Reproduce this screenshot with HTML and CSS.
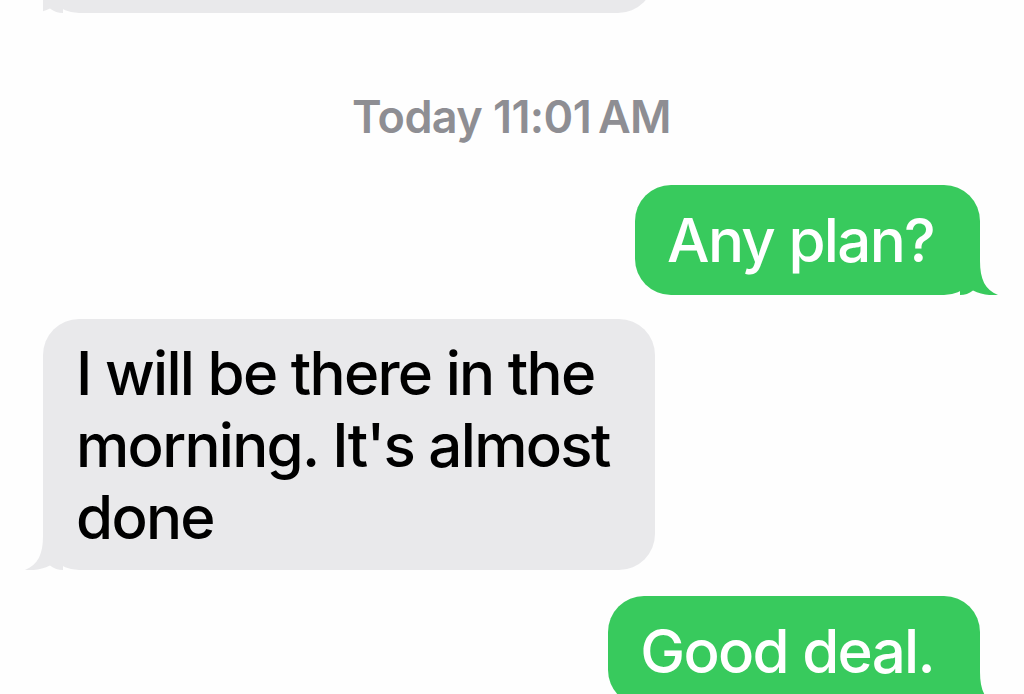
FILE: index.html
```html
<!DOCTYPE html>
<html lang="en">
<head>
<meta charset="utf-8">
<title>Messages</title>
<link rel="stylesheet" href="styles.css">
</head>
<body>
<div class="chat">
  <div class="clip">
    <div class="row in">
      <div class="bubble gray stub">
        <svg class="tail" viewBox="0 0 40 40" aria-hidden="true"><path d="M0,0 H20 V6 C20,24 25,35 38,40 C31,40.8 21,39.5 13,35.5 C9,38.5 5,40 0,40 Z"/></svg>
      </div>
    </div>
  </div>

  <div class="stamp">Today 11:01&#8201;AM</div>

  <div class="row out">
    <div class="bubble green">Any plan?<svg class="tail" viewBox="0 0 40 40" aria-hidden="true"><path d="M0,0 H20 V6 C20,24 25,35 38,40 C31,40.8 21,39.5 13,35.5 C9,38.5 5,40 0,40 Z"/></svg></div>
  </div>

  <div class="row in">
    <div class="bubble gray long">I will be there in the<br>morning. It's almost<br>done<svg class="tail" viewBox="0 0 40 40" aria-hidden="true"><path d="M0,0 H20 V6 C20,24 25,35 38,40 C31,40.8 21,39.5 13,35.5 C9,38.5 5,40 0,40 Z"/></svg></div>
  </div>

  <div class="row out">
    <div class="bubble green">Good deal.<svg class="tail" viewBox="0 0 40 40" aria-hidden="true"><path d="M0,0 H20 V6 C20,24 25,35 38,40 C31,40.8 21,39.5 13,35.5 C9,38.5 5,40 0,40 Z"/></svg></div>
  </div>
</div>
</body>
</html>
```

FILE: styles.css
```css
html, body {
  margin: 0;
  padding: 0;
  background: #fefefe;
}

body {
  width: 1024px;
  height: 694px;
  overflow: hidden;
  font-family: Inter, "Liberation Sans", Arial, sans-serif;
}

.chat {
  display: flex;
  flex-direction: column;
  padding: 0 44px 0 43px;
}

.clip {
  height: 13px;
  overflow: hidden;
  display: flex;
  flex-direction: column;
  justify-content: flex-end;
}

.row {
  display: flex;
}

.row.out {
  justify-content: flex-end;
}

.row.in {
  justify-content: flex-start;
}

.bubble {
  position: relative;
  font-size: 60px;
  line-height: 72px;
  font-weight: 500;
  letter-spacing: -1.7px;
  border-radius: 36px;
  padding: 19px 46px 19px 32px;
}

.bubble .tail {
  position: absolute;
  bottom: 0;
  width: 40px;
  height: 40px;
}

.green {
  background: #38ca5d;
  color: #ffffff;
}

.green .tail {
  right: -20px;
  fill: #38ca5d;
}

.gray {
  background: #e9e9eb;
  color: #000000;
}

.gray .tail {
  left: -20px;
  fill: #e9e9eb;
  transform: scaleX(-1);
}

.stub {
  width: 611px;
  height: 80px;
  padding: 0;
  box-sizing: border-box;
  flex: none;
}

.row.out + .row.in {
  margin-top: 24px;
}

.row.in + .row.out {
  margin-top: 26px;
}

.long {
  padding: 18px 45px 17px 33px;
}

.stamp {
  margin: 76px 0 40px;
  text-align: center;
  font-size: 45px;
  line-height: 56px;
  font-weight: 600;
  color: #8e8e93;
  letter-spacing: -0.6px;
}
```
